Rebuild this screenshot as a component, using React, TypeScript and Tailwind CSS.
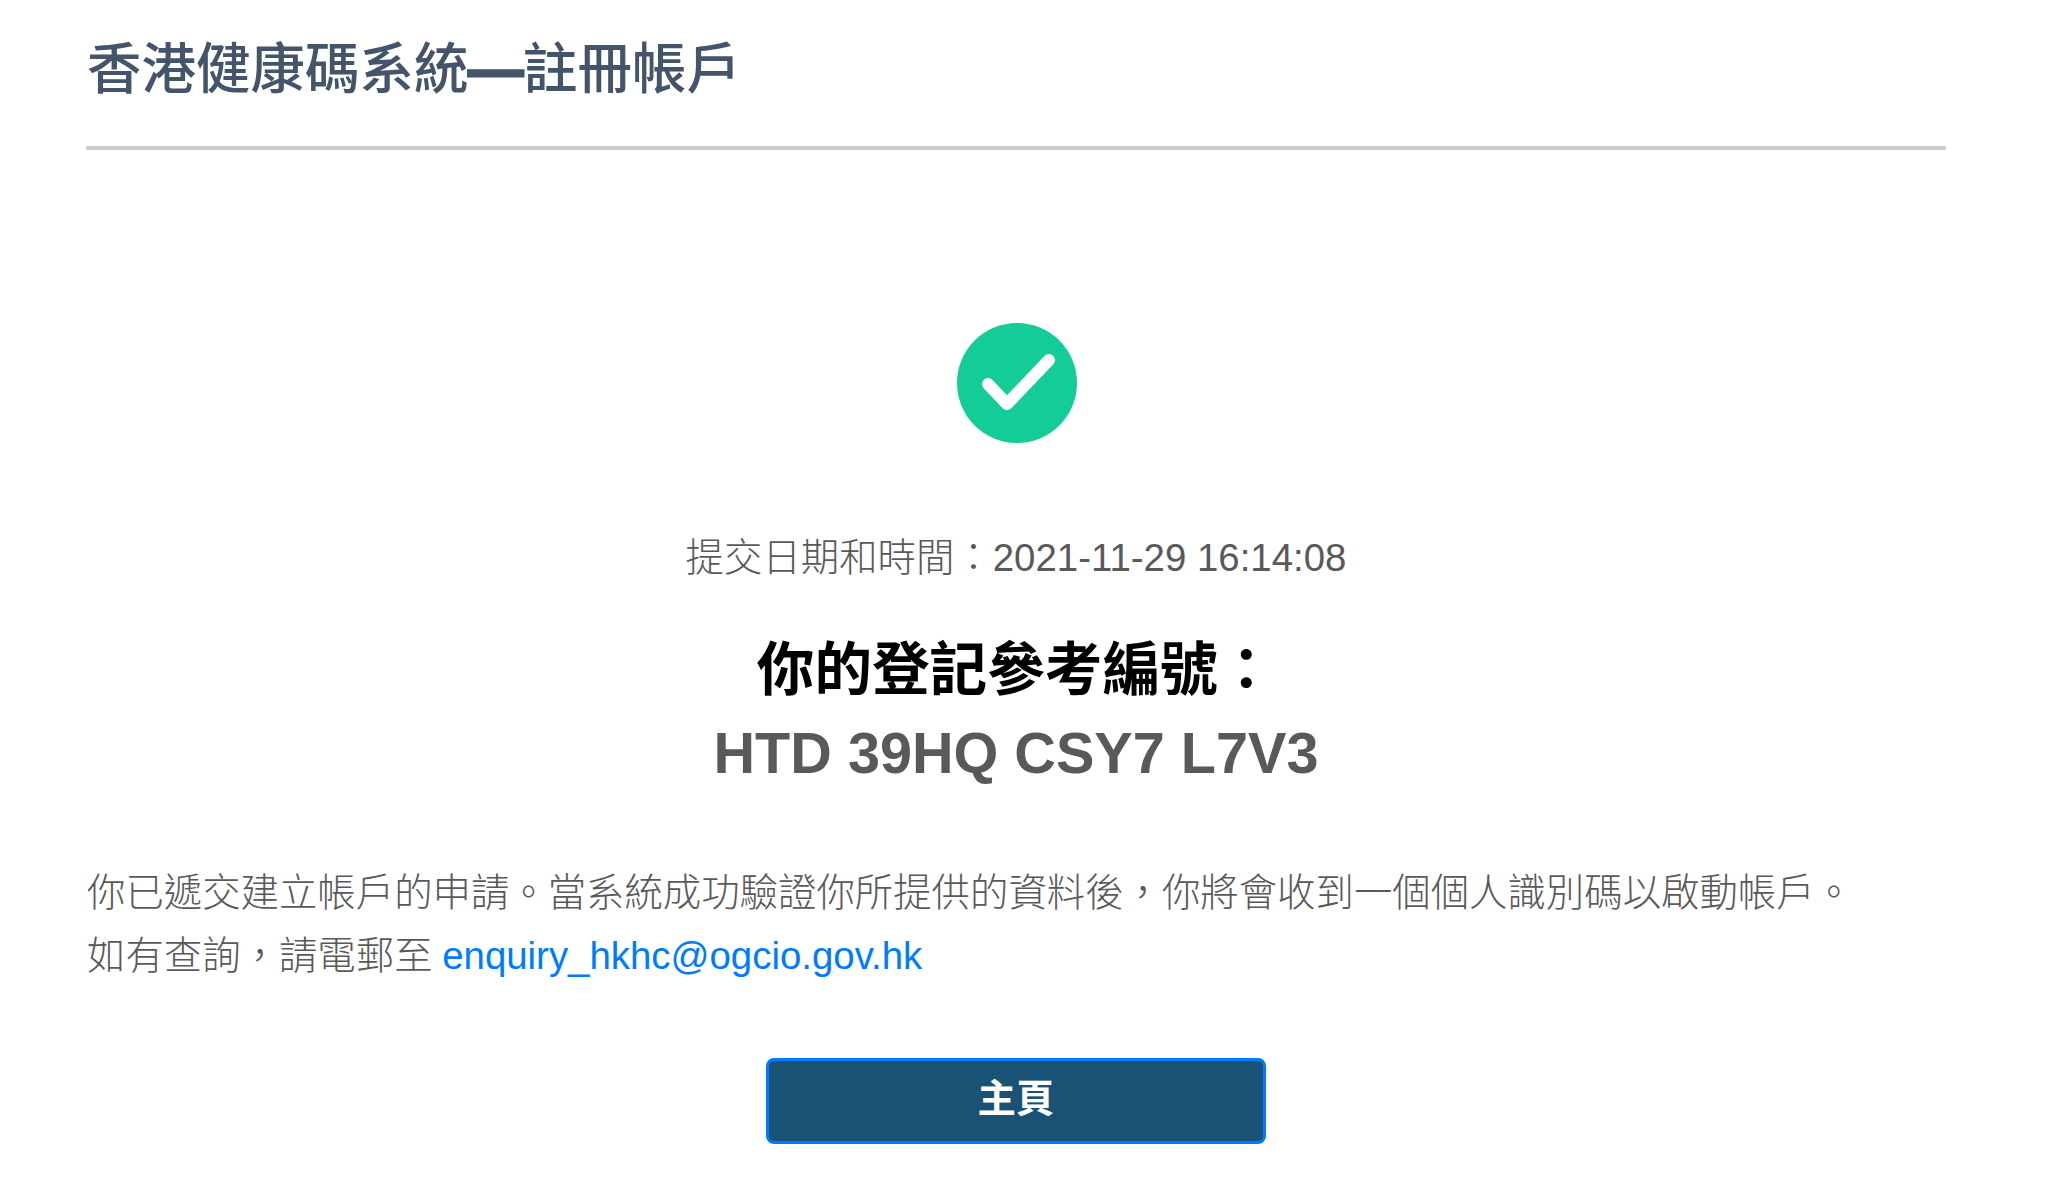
export default function App() {
  return (
    <div className="min-h-[1194px] bg-white pl-[86px] pr-[102px] font-['Liberation_Sans','Noto_Sans_CJK_TC',sans-serif] text-[38.4px] text-[#595959]">
      <h1 className="h-[150px] border-b-4 border-[#ccc] pl-[1px] pt-[38px] text-[54.5px] font-medium leading-[64px] text-[#44546a]">
        香港健康碼系統<span className="font-bold [-webkit-text-stroke:3px_#44546a]">—</span>註冊帳戶
      </h1>
      <div className="flex flex-col items-center pt-[173px]">
        <svg className="ml-[2px] h-[120px] w-[120px]" viewBox="0 0 120 120" aria-hidden="true">
          <circle cx="60" cy="60" r="60" fill="#14cc97" />
          <path d="M31 61 L50 81 L92 37" fill="none" stroke="#fff" strokeWidth="12" strokeLinecap="round" strokeLinejoin="round" />
        </svg>
        <p className="mt-[85px] font-light leading-[60px]">提交日期和時間：2021-11-29 16:14:08</p>
        <h2 className="mt-[41px] text-[57.6px] font-bold leading-[82px] text-black">你的登記參考編號：</h2>
        <p className="text-[57.6px] font-bold leading-[85px]">HTD 39HQ CSY7 L7V3</p>
      </div>
      <p className="mt-[65px] pl-[1px] font-light leading-[63px]">
        你已遞交建立帳戶的申請。當系統成功驗證你所提供的資料後，你將會收到一個個人識別碼以啟動帳戶。
        <br />
        如有查詢，請電郵至 <a href="#" className="-ml-[1px] text-[#007bff]">enquiry_hkhc@ogcio.gov.hk</a>
      </p>
      <div className="mt-[71px] flex justify-center">
        <button className="h-[86px] w-[500px] rounded-lg border-[3px] border-[#007bff] bg-[#1a5276] pb-[4px] text-[38.4px] font-bold text-white">
          主頁
        </button>
      </div>
    </div>
  );
}
